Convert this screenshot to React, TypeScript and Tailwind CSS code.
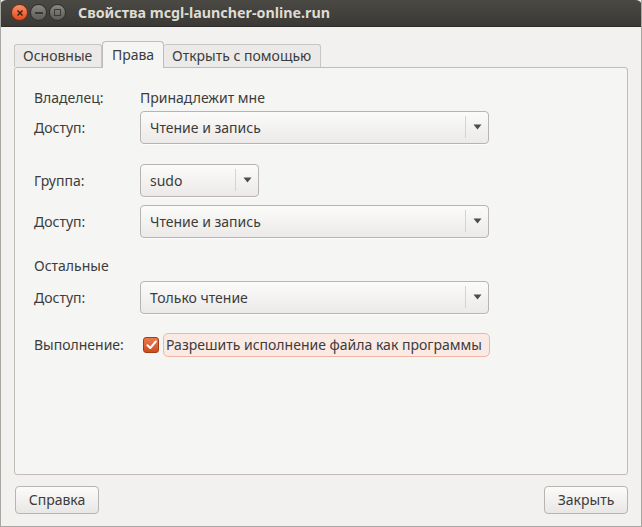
import React from 'react';

const FONT = { fontFamily: '"Noto Sans", "DejaVu Sans", sans-serif' };

function Combo({ value, width }: { value: string; width: string }) {
  return (
    <div
      className={`${width} h-[33px] flex items-center rounded-[4px] border border-[#b8b5b0] bg-gradient-to-b from-[#fbfbfa] to-[#eceae8] shadow-[0_1px_0_rgba(255,255,255,0.8)]`}
    >
      <span className="flex-1 pl-[9px] text-[14px] text-[#3c3c3c]">{value}</span>
      <span className="w-px h-[22px] bg-[#d6d4d0]" />
      <span className="w-[22px] flex justify-center">
        <svg width="9" height="6" viewBox="0 0 9 6">
          <path d="M0.5 0.5h8L4.5 5.5z" fill="#4c4c4c" />
        </svg>
      </span>
    </div>
  );
}

function Label({ children }: { children: React.ReactNode }) {
  return <span className="w-[106px] text-[14px] text-[#3c3c3c]">{children}</span>;
}

function Button({ children }: { children: React.ReactNode }) {
  return (
    <button className="w-[84px] h-[28px] rounded-[4px] border border-[#b8b5b0] bg-gradient-to-b from-[#fbfbfa] to-[#e9e7e5] text-[14px] text-[#3c3c3c]">
      {children}
    </button>
  );
}

export default function App() {
  return (
    <div style={FONT} className="w-[642px] h-[527px] flex flex-col bg-[#f2f1f0] border-x border-b border-[#a9a7a2] overflow-hidden">
      {/* Title bar */}
      <div className="h-[27px] flex items-center bg-gradient-to-b from-[#4a4944] to-[#3a3935] border-b border-[#2f2e2a] rounded-t-[6px] -mx-px">
        <div className="flex items-center gap-[2px] pl-[11px]">
          <span className="w-[17px] h-[17px] rounded-full bg-gradient-to-b from-[#f58f64] to-[#e1491b] border border-[#7a2a10] flex items-center justify-center">
            <svg width="8" height="8" viewBox="0 0 8 8">
              <path d="M1.5 1.5l5 5M6.5 1.5l-5 5" stroke="#3a1a0a" strokeWidth="1.4" />
            </svg>
          </span>
          <span className="w-[17px] h-[17px] rounded-full bg-gradient-to-b from-[#8a8984] to-[#5c5b57] border border-[#2e2d2a] flex items-center justify-center">
            <span className="w-[8px] h-[2px] bg-[#3a3936]" />
          </span>
          <span className="w-[17px] h-[17px] rounded-full bg-gradient-to-b from-[#8a8984] to-[#5c5b57] border border-[#2e2d2a] flex items-center justify-center">
            <span className="w-[7px] h-[7px] border-[1.5px] border-[#3a3936]" />
          </span>
        </div>
        <span className="ml-[12px] text-[14.3px] font-bold text-[#dfdbd2]">Свойства mcgl-launcher-online.run</span>
      </div>

      {/* Notebook */}
      <div className="flex-1 flex flex-col px-[13px] pt-[14px]">
        <div className="flex items-end h-[26px] relative z-10">
          <span className="h-[23px] px-[8px] flex items-center border border-b-0 border-[#c9c6c1] rounded-t-[3px] bg-[#eceae8] text-[14px] text-[#3c3c3c] w-[88px]">Основные</span>
          <span className="h-[27px] -mb-px flex items-center justify-center border border-b-0 border-[#c0bdb8] rounded-t-[4px] bg-[#f5f5f4] text-[14px] text-[#3c3c3c] w-[62px]">Права</span>
          <span className="h-[23px] px-[8px] flex items-center border border-b-0 border-l-0 border-[#c9c6c1] rounded-t-[3px] bg-[#eceae8] text-[14px] text-[#3c3c3c] w-[157px]">Открыть с помощью</span>
        </div>
        <div className="h-[408px] rounded-[3px] border border-[#c0bdb8] bg-[#f5f5f4] pl-[19px] pt-[19px] text-[#3c3c3c]">
          <div className="flex items-center h-[21px]">
            <Label>Владелец:</Label>
            <span className="text-[14px]">Принадлежит мне</span>
          </div>
          <div className="flex items-center mt-[3px]">
            <Label>Доступ:</Label>
            <Combo value="Чтение и запись" width="w-[349px]" />
          </div>
          <div className="flex items-center mt-[20px]">
            <Label>Группа:</Label>
            <Combo value="sudo" width="w-[119px]" />
          </div>
          <div className="flex items-center mt-[8px]">
            <Label>Доступ:</Label>
            <Combo value="Чтение и запись" width="w-[349px]" />
          </div>
          <div className="flex items-center h-[21px] mt-[17px]">
            <span className="text-[14px]">Остальные</span>
          </div>
          <div className="flex items-center mt-[5px]">
            <Label>Доступ:</Label>
            <Combo value="Только чтение" width="w-[349px]" />
          </div>
          <div className="flex items-center mt-[19px]">
            <Label>Выполнение:</Label>
            <span className="ml-[3px] w-[16px] h-[16px] rounded-[3px] bg-gradient-to-b from-[#ec7a4d] to-[#cf4c1c] border border-[#a23c16] flex items-center justify-center">
              <svg width="11" height="10" viewBox="0 0 11 10">
                <path d="M1.5 5.2l2.8 2.8 5.5-6.5" stroke="#fff" strokeWidth="2" fill="none" strokeLinecap="round" strokeLinejoin="round" />
              </svg>
            </span>
            <span className="ml-[4px] h-[24px] w-[327px] flex items-center pl-[2px] rounded-[5px] border border-[#f2b5a3] bg-[#fbe9e4] text-[14px]">
              Разрешить исполнение файла как программы
            </span>
          </div>
        </div>
      </div>

      {/* Buttons */}
      <div className="h-[52px] flex items-start justify-between pl-[14px] pr-[13px] pt-[11px]">
        <Button>Справка</Button>
        <Button>Закрыть</Button>
      </div>
    </div>
  );
}
